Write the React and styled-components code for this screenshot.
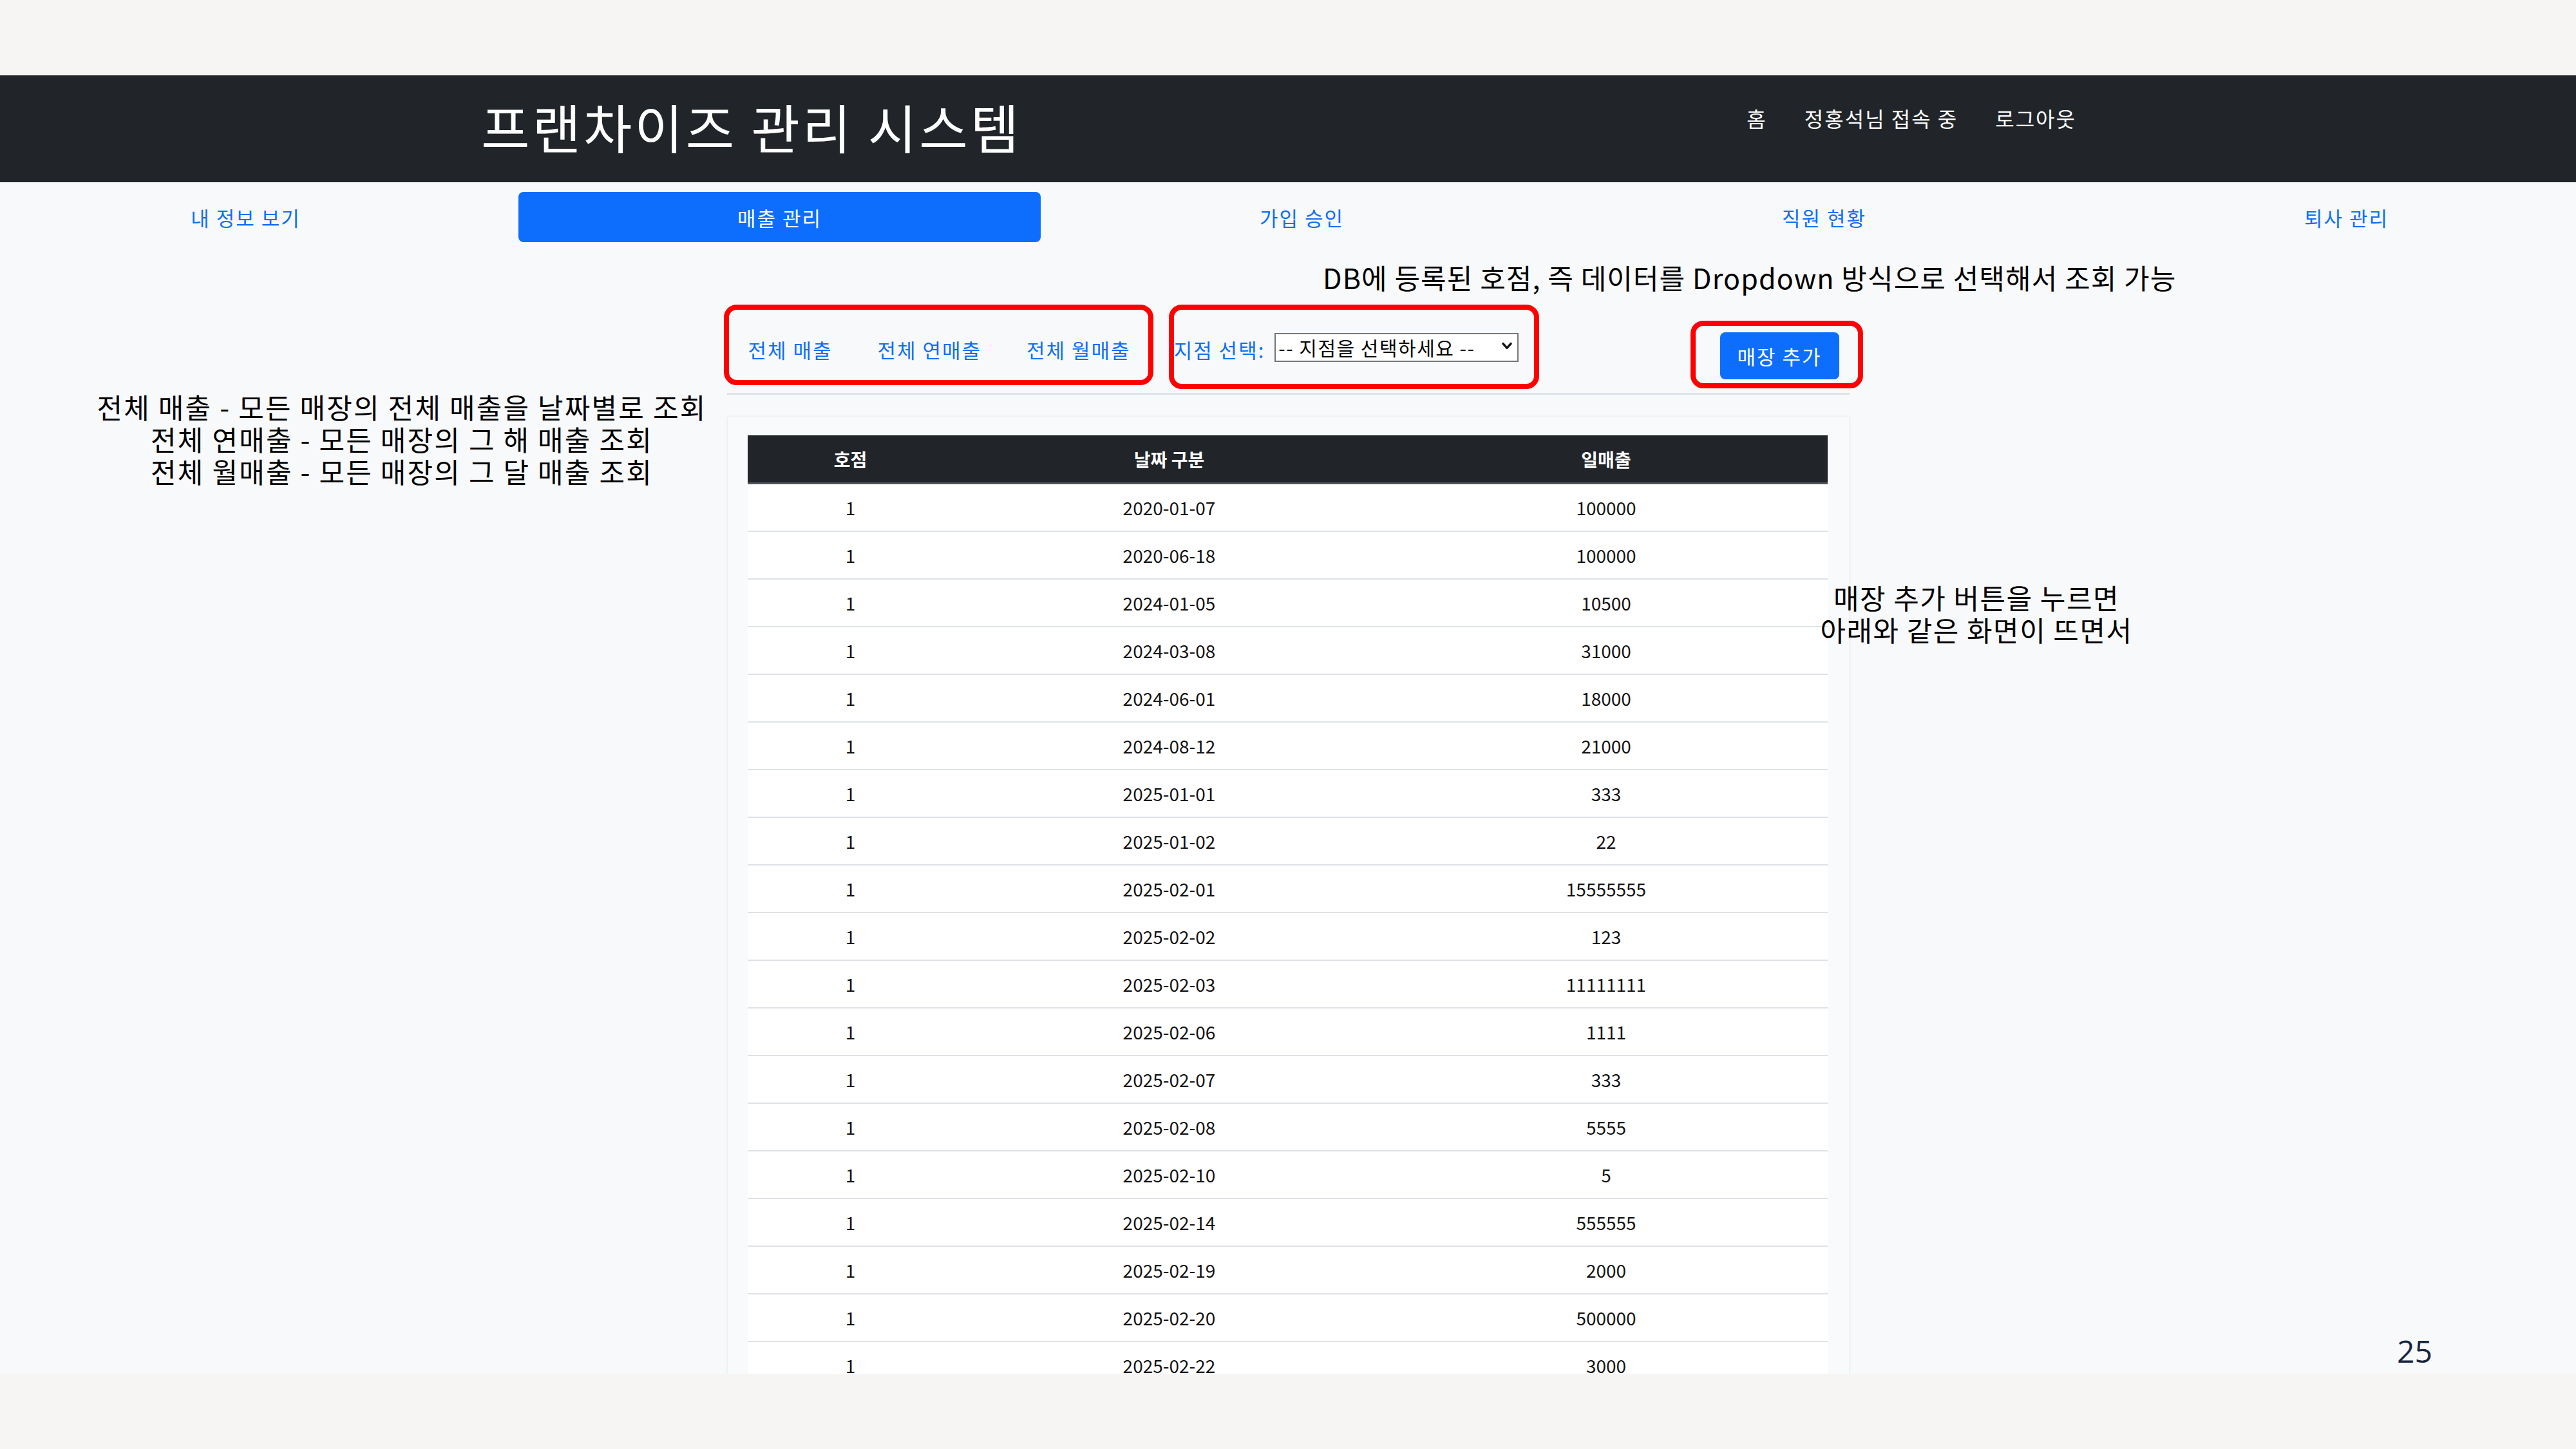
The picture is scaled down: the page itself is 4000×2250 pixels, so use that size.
import React from 'react'
import styled, { createGlobalStyle } from 'styled-components';

const FONT = `"Noto Sans CJK KR", "Noto Sans", sans-serif`;

const rows = [
  ['1','2020-01-07','100000'],
  ['1','2020-06-18','100000'],
  ['1','2024-01-05','10500'],
  ['1','2024-03-08','31000'],
  ['1','2024-06-01','18000'],
  ['1','2024-08-12','21000'],
  ['1','2025-01-01','333'],
  ['1','2025-01-02','22'],
  ['1','2025-02-01','15555555'],
  ['1','2025-02-02','123'],
  ['1','2025-02-03','11111111'],
  ['1','2025-02-06','1111'],
  ['1','2025-02-07','333'],
  ['1','2025-02-08','5555'],
  ['1','2025-02-10','5'],
  ['1','2025-02-14','555555'],
  ['1','2025-02-19','2000'],
  ['1','2025-02-20','500000'],
  ['1','2025-02-22','3000'],
];

const tabs = ['내 정보 보기','매출 관리','가입 승인','직원 현황','퇴사 관리'];

const App = () => {
  return (
    <Frame>
      <GlobalStyle/>
      <Slide>
        <Header>
          <Title>프랜차이즈 관리 시스템</Title>
          <TopNav>
            <span>홈</span>
            <span>정홍석님 접속 중</span>
            <span>로그아웃</span>
          </TopNav>
        </Header>
        <Tabs>
          {tabs.map((t)=>(
            <Tab key={t} active={t==='매출 관리'}>{t}</Tab>
          ))}
        </Tabs>
        <Container>
          <FilterBar>
            <LinkGroup>
              <FilterLink>전체 매출</FilterLink>
              <FilterLink>전체 연매출</FilterLink>
              <FilterLink>전체 월매출</FilterLink>
            </LinkGroup>
            <Label>지점 선택:</Label>
            <SelectWrap>
              <Select defaultValue="">
                <option value="">-- 지점을 선택하세요 --</option>
              </Select>
              <Chevron viewBox="0 0 12 10">
                <path d="M1.5 2.5 L6 7.5 L10.5 2.5" fill="none" stroke="#111" strokeWidth="2.6" strokeLinecap="round" strokeLinejoin="round"/>
              </Chevron>
            </SelectWrap>
            <AddButton>매장 추가</AddButton>
          </FilterBar>
          <Rule/>
          <Card>
            <Table>
              <colgroup>
                <col style={{width:'320px'}}/>
                <col style={{width:'670px'}}/>
                <col/>
              </colgroup>
              <thead>
                <tr>
                  <Th>호점</Th>
                  <Th>날짜 구분</Th>
                  <Th>일매출</Th>
                </tr>
              </thead>
              <tbody>
                {rows.map((r,i)=>(
                  <tr key={i}>
                    <Td>{r[0]}</Td>
                    <Td>{r[1]}</Td>
                    <Td>{r[2]}</Td>
                  </tr>
                ))}
              </tbody>
            </Table>
          </Card>
        </Container>
      </Slide>

      {/* 슬라이드 주석 */}
      <Mark left={1124} top={473} width={667} height={125}/>
      <Mark left={1815} top={473} width={575} height={131}/>
      <Mark left={2625} top={498} width={268} height={105}/>
      <Note left={2054} top={405} spacing={1.1}>DB에 등록된 호점, 즉 데이터를 Dropdown 방식으로 선택해서 조회 가능</Note>
      <CenterNote left={4} top={606} width={1240} spacing={2.2}>
        전체 매출 - 모든 매장의 전체 매출을 날짜별로 조회<br/>
        전체 연매출 - 모든 매장의 그 해 매출 조회<br/>
        전체 월매출 - 모든 매장의 그 달 매출 조회
      </CenterNote>
      <CenterNote left={2669} top={902} width={800} spacing={1.5}>
        매장 추가 버튼을 누르면<br/>
        아래와 같은 화면이 뜨면서
      </CenterNote>
      <PageNum>25</PageNum>
    </Frame>
  )
}

const GlobalStyle = createGlobalStyle`
  body {
    margin: 0;
    background: #f6f5f3;
    font-family: ${FONT};
  }
`

const Frame = styled.div`
  position: relative;
  width: 4000px;
  height: 2250px;
  overflow: hidden;
  background: #f6f5f3;
  display: flex;
  flex-direction: column;
`

const Slide = styled.div`
  margin-top: 117px;
  height: 2016px;
  background: #f8f9fa;
  overflow: hidden;
  display: flex;
  flex-direction: column;
`

const Header = styled.div`
  height: 166px;
  flex: 0 0 166px;
  background: #212529;
  display: flex;
  align-items: center;
  padding: 0 776px 0 747px;
  box-sizing: border-box;
`

const Title = styled.div`
  color: #ffffff;
  font-size: 82px;
  letter-spacing: 4px;
  line-height: 1;
  font-weight: 400;
  margin-bottom: 8px;
`

const TopNav = styled.div`
  margin-left: auto;
  margin-bottom: 34px;
  display: flex;
  gap: 58px;
  color: #ffffff;
  font-size: 32px;
  letter-spacing: 2px;
`

const Tabs = styled.div`
  display: flex;
  margin-left: -6px;
  padding-top: 15px;
`

const Tab = styled.div`
  flex: 0 0 811px;
  box-sizing: border-box;
  height: 78px;
  display: flex;
  align-items: center;
  justify-content: center;
  font-size: 31px;
  letter-spacing: 2px;
  border-radius: 8px;
  color: ${props => props.active ? '#ffffff' : '#0d6efd'};
  background: ${props => props.active ? '#0d6efd' : 'transparent'};
  &:first-child {
    padding-right: 36px;
  }
`

const Container = styled.div`
  width: 1743px;
  margin: 0 auto;
  display: flex;
  flex-direction: column;
`

const FilterBar = styled.div`
  margin-top: 124px;
  height: 84px;
  display: flex;
  align-items: center;
  padding: 0 16px 0 33px;
`

const LinkGroup = styled.div`
  display: flex;
  gap: 70px;
`

const FilterLink = styled.span`
  color: #0d6efd;
  font-size: 31px;
  letter-spacing: 2px;
`

const Label = styled.span`
  margin-left: 67px;
  color: #0d6efd;
  font-size: 31px;
  letter-spacing: 2px;
`

const SelectWrap = styled.div`
  position: relative;
  margin-left: 15px;
  margin-top: -6px;
`

const Select = styled.select`
  appearance: none;
  width: 379px;
  height: 45px;
  box-sizing: border-box;
  border: 2px solid #767676;
  border-radius: 0;
  background: #ffffff;
  color: #000;
  font-family: ${FONT};
  font-size: 30px;
  letter-spacing: 1.5px;
  padding: 0 0 0 4px;
  line-height: 41px;
`

const Chevron = styled.svg`
  position: absolute;
  right: 10px;
  top: 13px;
  width: 16px;
  height: 14px;
  pointer-events: none;
`

const AddButton = styled.button`
  margin-left: auto;
  margin-top: 20px;
  width: 185px;
  height: 73px;
  border: none;
  border-radius: 8px;
  background: #0d6efd;
  color: #ffffff;
  font-family: ${FONT};
  font-size: 31px;
  letter-spacing: 2px;
`

const Rule = styled.div`
  margin-top: 26px;
  height: 3px;
  background: #dee2e6;
`

const Card = styled.div`
  margin-top: 34px;
  padding: 28px 33px 0 31px;
  background: #f9fafb;
  border: 1px solid #eceef0;
  border-bottom: none;
  box-shadow: 0 0 6px rgba(0,0,0,0.04);
  flex: 1;
`

const Table = styled.table`
  width: 100%;
  border-collapse: collapse;
  table-layout: fixed;
  font-size: 28px;
`

const Th = styled.th`
  height: 73px;
  padding: 0;
  background: #212529;
  color: #ffffff;
  font-weight: 700;
  text-align: center;
  border-bottom: 3px solid #50545a;
`

const Td = styled.td`
  height: 72px;
  padding: 0;
  background: #ffffff;
  color: #111;
  text-align: center;
  border-bottom: 2px solid #dee2e6;
`

const Mark = styled.div`
  position: absolute;
  left: ${props => props.left}px;
  top: ${props => props.top}px;
  width: ${props => props.width}px;
  height: ${props => props.height}px;
  box-sizing: border-box;
  border: 8px solid #ff0000;
  border-radius: 20px;
`

const Note = styled.div`
  position: absolute;
  left: ${props => props.left}px;
  top: ${props => props.top}px;
  white-space: nowrap;
  font-size: 43px;
  letter-spacing: ${props => props.spacing}px;
  line-height: 1.2;
  color: #000;
`

const CenterNote = styled.div`
  position: absolute;
  left: ${props => props.left}px;
  top: ${props => props.top}px;
  width: ${props => props.width}px;
  text-align: center;
  font-size: 43px;
  letter-spacing: ${props => props.spacing}px;
  line-height: 50px;
  color: #000;
`

const PageNum = styled.div`
  position: absolute;
  left: 3722px;
  top: 2074px;
  font-size: 48px;
  line-height: 1;
  color: #16273f;
  font-family: "Open Sans", sans-serif;
`

export default App
